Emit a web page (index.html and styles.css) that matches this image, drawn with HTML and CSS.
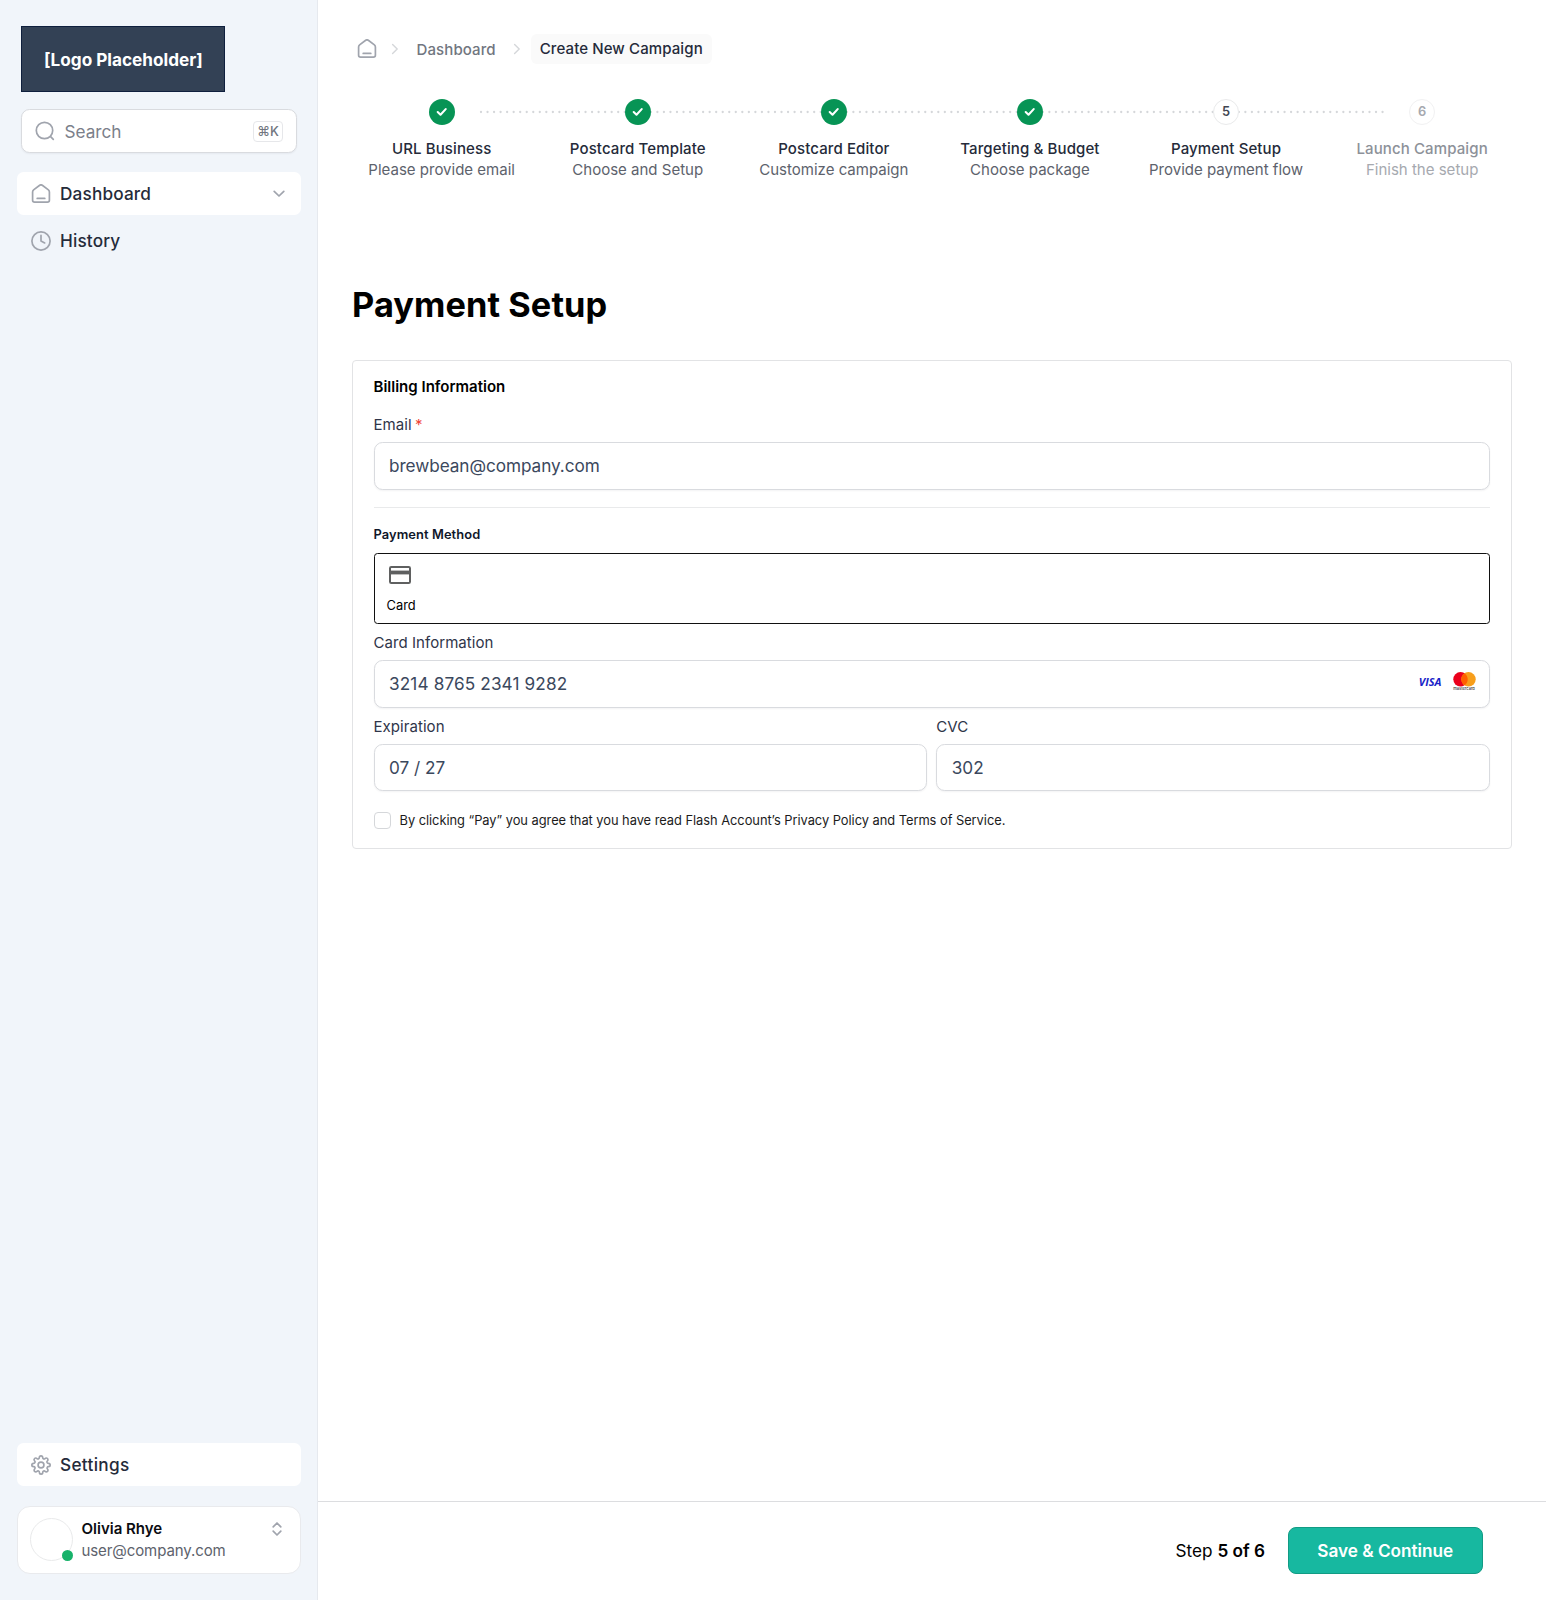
FILE: index.html
```html
<!DOCTYPE html>
<html lang="en">
<head>
<meta charset="utf-8">
<title>Payment Setup</title>
<link rel="stylesheet" href="styles.css">
</head>
<body>
<svg width="0" height="0" class="defs">
  <defs>
    <symbol id="home" viewBox="0 0 20 20"><path d="M1.600 7.900c0-.9.4-1.500 1-2L8.700 1.300c.8-.6 1.800-.6 2.600 0l6.100 4.600c.6.500 1 1.100 1 2v8.300c0 1.200-.8 1.900-2 1.900H3.600c-1.200 0-2-.7-2-1.900zM6.200 14.400h7.600"/></symbol>
    <symbol id="check" viewBox="0 0 26 26"><path d="M8.700 13l2.800 2.700 5.200-5.600"/></symbol>
    <symbol id="right" viewBox="0 0 10 12"><path d="M2.600 1.500L7.200 6l-4.600 4.500"/></symbol>
  </defs>
</svg>
<div class="app">
  <aside class="sidebar">
    <div class="logo"><span>[Logo Placeholder]</span></div>
    <div class="search">
      <svg class="icon" width="20" height="20" viewBox="0 0 20 20"><circle cx="9.500" cy="9.500" r="8.200"/><path d="M15.600 15.600l2.700 2.700"/></svg>
      <span class="search-text">Search</span>
      <span class="key">⌘K</span>
    </div>
    <nav class="nav">
      <a class="nav-item active"><svg class="icon" width="20" height="20"><use href="#home"/></svg><span>Dashboard</span>
        <svg class="icon chev" width="12" height="8" viewBox="0 0 12 8"><path d="M1.200 1.300L6 6l4.800-4.700"/></svg></a>
      <a class="nav-item"><svg class="icon" width="20" height="20" viewBox="0 0 20 20"><circle cx="10" cy="10" r="9.100"/><path d="M10 4.400V10l3.700 1.900"/></svg><span>History</span></a>
    </nav>
    <a class="nav-item active settings"><svg class="icon gear" width="20" height="20" viewBox="0 0 24 24"><circle cx="12" cy="12" r="3.500"/><path d="M19.400 15a1.650 1.650 0 0 0 .33 1.820l.06.06a2 2 0 1 1-2.830 2.830l-.06-.06a1.650 1.650 0 0 0-2.800 1.170V21a2 2 0 0 1-4 0v-.09a1.650 1.650 0 0 0-2.880-1.260l-.06.06a2 2 0 1 1-2.830-2.830l.06-.06A1.650 1.650 0 0 0 3.100 14H3a2 2 0 0 1 0-4h.09a1.650 1.650 0 0 0 1.260-2.880l-.06-.06a2 2 0 1 1 2.830-2.830l.06.06A1.650 1.650 0 0 0 10 3.100V3a2 2 0 0 1 4 0v.09a1.650 1.650 0 0 0 2.820 1.200l.06-.06a2 2 0 1 1 2.830 2.830l-.06.06A1.650 1.650 0 0 0 20.900 10H21a2 2 0 0 1 0 4h-.09a1.650 1.650 0 0 0-1.510 1z"/></svg><span class="settings-text">Settings</span></a>
    <div class="user">
      <div class="avatar"><i class="online"></i></div>
      <div class="user-text"><b>Olivia Rhye</b><span>user@company.com</span></div>
      <svg class="icon updown" width="10" height="14" viewBox="0 0 10 14"><path d="M1.200 4.800L5 1l3.800 3.800M1.200 9.200L5 13l3.800-3.800"/></svg>
    </div>
  </aside>
  <div class="page">
    <main class="content">
      <div class="crumbs">
        <svg class="icon" width="20" height="20"><use href="#home"/></svg>
        <svg class="sep sep-a" width="10" height="12"><use href="#right"/></svg>
        <span class="crumb">Dashboard</span>
        <svg class="sep sep-b" width="10" height="12"><use href="#right"/></svg>
        <span class="crumb current">Create New Campaign</span>
      </div>
      <div class="stepper">
        <svg class="track" width="908" height="4"><path d="M2 2H906"/></svg>
        <div class="step"><svg class="done" width="26" height="26"><use href="#check"/></svg><b>URL Business</b><span>Please provide email</span></div>
        <div class="step"><svg class="done" width="26" height="26"><use href="#check"/></svg><b>Postcard Template</b><span>Choose and Setup</span></div>
        <div class="step"><svg class="done" width="26" height="26"><use href="#check"/></svg><b>Postcard Editor</b><span>Customize campaign</span></div>
        <div class="step"><svg class="done" width="26" height="26"><use href="#check"/></svg><b>Targeting &amp; Budget</b><span>Choose package</span></div>
        <div class="step"><i class="num">5</i><b>Payment Setup</b><span>Provide payment flow</span></div>
        <div class="step upcoming"><i class="num">6</i><b>Launch Campaign</b><span>Finish the setup</span></div>
      </div>
      <h1>Payment Setup</h1>
      <section class="card">
        <h2>Billing Information</h2>
        <label class="label">Email <em>*</em></label>
        <div class="input"><span class="email">brewbean@company.com</span></div>
        <hr>
        <h3>Payment Method</h3>
        <div class="method">
          <svg width="22" height="18" viewBox="0 0 22 18"><rect x="1" y="1" width="20" height="16" rx="1.300"/><path class="stripe" d="M1 6.500h20"/></svg>
          <span>Card</span>
        </div>
        <label class="label">Card Information</label>
        <div class="input"><span class="number">3214 8765 2341 9282</span>
          <div class="brands">
            <span class="visa">VISA</span>
            <span class="mc"><svg width="23" height="15" viewBox="0 0 23 15"><circle cx="7.500" cy="7.300" r="7.200" fill="#eb001b"/><circle cx="15.500" cy="7.300" r="7.200" fill="#f79e1b"/><path d="M11.500 1.300a7.200 7.200 0 0 1 0 12 7.200 7.200 0 0 1 0-12z" fill="#ff5f00"/></svg><small>mastercard</small></span>
          </div>
        </div>
        <div class="pair">
          <div><label class="label">Expiration</label><div class="input"><span>07 / 27</span></div></div>
          <div><label class="label">CVC</label><div class="input"><span>302</span></div></div>
        </div>
        <div class="agree"><i class="box"></i><span>By clicking “Pay” you agree that you have read Flash Account’s Privacy Policy and Terms of Service.</span></div>
      </section>
    </main>
    <footer class="footer">
      <span class="count">Step <b>5 of 6</b></span>
      <button class="save">Save &amp; Continue</button>
    </footer>
  </div>
</div>
</body>
</html>
```
FILE: styles.css
```css
* { box-sizing: border-box; }
body { margin: 0; font-family: Inter, "Liberation Sans", sans-serif; font-size: 15.03px; color: #101828; background: #fff; }
svg { display: block; flex: none; fill: none; stroke-linecap: round; stroke-linejoin: round; }
i, em { font-style: normal; }
.defs { position: absolute; }
.app { display: flex; height: 1600px; }
.icon { stroke: #a0a4ad; stroke-width: 1.7; }
.gear { stroke-width: 2; }

.sidebar { width: 318px; flex: none; display: flex; flex-direction: column; padding: 26px 16px 26px 17px; background: #f1f5fa; border-right: 1px solid #e6e9ee; }
.logo { width: 204px; height: 66px; margin-left: 4.4px; display: flex; align-items: center; justify-content: center; background: #334155; border: 1px solid #0f1f3d; color: #fff; font-weight: 700; font-size: 17.18px; }
.search { height: 44px; margin: 17px 4px 19px; padding: 0 13px; display: flex; align-items: center; background: #fff; border: 1.5px solid #d9dbdf; border-radius: 8.6px; box-shadow: 0 1px 2px rgba(16,24,40,.05); }
.search-text { margin-left: 9.5px; flex: 1; font-size: 17.18px; color: #7b808a; }
.key { width: 30px; height: 21px; display: flex; align-items: center; justify-content: center; border: 1px solid #e6e7ea; border-radius: 4px; font-size: 12.88px; font-weight: 500; color: #717680; }
.nav { display: flex; flex-direction: column; gap: 4px; }
.nav-item { height: 43px; padding: 0 16px 0 14px; display: flex; align-items: center; gap: 9px; border-radius: 6.5px; font-size: 17.18px; font-weight: 500; letter-spacing: .17px; color: #252b3a; }
.settings-text { letter-spacing: .33px; }
.active { background: #fff; }
.chev, .updown { margin-left: auto; }
.settings { margin-top: auto; }
.user { height: 68px; margin-top: 20px; padding: 11px 18px 0 12px; display: flex; align-items: flex-start; background: #fff; border: 1px solid #e9eaed; border-radius: 13px; }
.avatar { position: relative; width: 43px; height: 43px; border: 1px solid #e9eaeb; border-radius: 50%; }
.online { position: absolute; right: -1px; bottom: -1px; width: 11px; height: 11px; border-radius: 50%; background: #17b26a; }
.user-text { margin-left: 8.5px; display: flex; flex-direction: column; line-height: 21.5px; color: #5d626c; letter-spacing: -.1px; }
.user-text b { font-weight: 600; letter-spacing: 0; color: #0b0d12; }
.updown { margin-top: 4px; }

.page { flex: 1; display: flex; flex-direction: column; min-width: 0; }
.content { flex: 1; padding: 33px 34px 0 34px; }
.crumbs { height: 32px; display: flex; align-items: center; padding-left: 5px; }
.sep { stroke: #d5d7da; stroke-width: 1.4; }
.sep-a { margin: 0 16.5px 0 13px; }
.sep-b { margin: 0 8.5px 0 16.5px; }
.crumb { font-weight: 500; color: #717680; letter-spacing: .1px; }
.current { height: 30px; line-height: 30px; padding: 0 9px; border-radius: 6px; background: #fafafa; color: #252b3a; }
.stepper { position: relative; width: 1176.6px; margin: 33.5px 0 0 -8.4px; display: grid; grid-template-columns: repeat(6, 1fr); }
.track { position: absolute; left: 135px; top: 11px; stroke: #d5d7da; stroke-width: 2.3; stroke-dasharray: 0 6.533; }
.step { position: relative; display: flex; flex-direction: column; align-items: center; line-height: 21.5px; color: #5d626c; }
.step b { margin-top: 13px; font-weight: 500; letter-spacing: .11px; color: #252b3a; }
.done { border-radius: 50%; background: #079455; stroke: #fff; stroke-width: 2.1; }
.num { width: 26px; height: 26px; line-height: 24px; text-align: center; border: 1.5px solid #e9eaeb; border-radius: 50%; background: #fff; font-size: 12.88px; font-weight: 600; color: #414651; }
.step span { margin-top: -.5px; }
.upcoming span, .upcoming .num { color: #a6a9af; }
.upcoming b { color: #8d9199; }
.upcoming .num { border-color: #f1f1f2; }

h1 { margin: 104px 0 34.5px; font-size: 34.35px; line-height: 41px; font-weight: 700; letter-spacing: .08px; color: #000; }
.card { width: 1160px; height: 489.5px; padding: 15px 21px 0 20.5px; border: 1px solid #e2e3e5; border-radius: 4px; }
h2 { margin: 0 0 17px; font-size: 15.03px; line-height: 21.5px; font-weight: 600; color: #000; }
.label { display: block; height: 21.5px; margin-bottom: 6.5px; line-height: 21.5px; letter-spacing: .05px; color: #2f3549; }
.label em { color: #f04438; margin-left: -1px; }
.input { height: 47.5px; padding: 0 13px 0 14.5px; display: flex; align-items: center; border: 1.4px solid #d9dbdf; border-radius: 8.6px; background: #fff; box-shadow: 0 1px 2px rgba(16,24,40,.05); font-size: 17.18px; color: #3b485d; }
.email { letter-spacing: -.06px; }
.number { letter-spacing: .13px; }
hr { height: 1px; margin: 17px 0; border: 0; background: #e9eaeb; }
h3 { margin: 0 0 9px; font-size: 12.88px; line-height: 19px; font-weight: 600; letter-spacing: .08px; color: #0f172a; }
.method { height: 71px; margin-bottom: 8.5px; padding: 12px 12px 0; border: 1.3px solid #111; border-radius: 3.5px; font-size: 12.88px; line-height: 19px; color: #000; }
.method svg { margin-left: 2px; stroke: #5f6060; stroke-width: 2; }
.method .stripe { stroke-width: 3.8; stroke-linecap: butt; }
.method span { display: block; margin-top: 12px; }
.brands { margin: -4px 0 0 auto; display: flex; align-items: center; gap: 11px; }
.visa { font: italic 700 11px/12px "Open Sans", sans-serif; letter-spacing: 0; color: #1a1fc8; }
.mc { width: 23px; margin-right: .5px; display: flex; flex-direction: column; align-items: center; }
.mc small { height: 4px; font-size: 4px; line-height: 4px; font-weight: 500; color: #333; }
.pair { display: grid; grid-template-columns: 1fr 1fr; gap: 9px; margin-top: 8px; }
.agree { display: flex; align-items: center; gap: 9px; margin-top: 20.5px; font-size: 12.88px; letter-spacing: -.042px; color: #1c1c1c; }
.box { width: 17px; height: 17px; border: 1px solid #d5d7da; border-radius: 4px; }

.footer { height: 99px; display: flex; align-items: center; justify-content: flex-end; padding: 0 63px 1px 0; border-top: 1.5px solid #dcdde0; font-size: 17.18px; color: #000; }
.count b { font-weight: 600; }
.save { width: 195.5px; height: 47px; margin-left: 22.5px; padding: 0; border: 1px solid #129b84; border-radius: 8px; background: #17b8a0; color: #fff; font: 600 17.18px Inter, sans-serif; }
```
